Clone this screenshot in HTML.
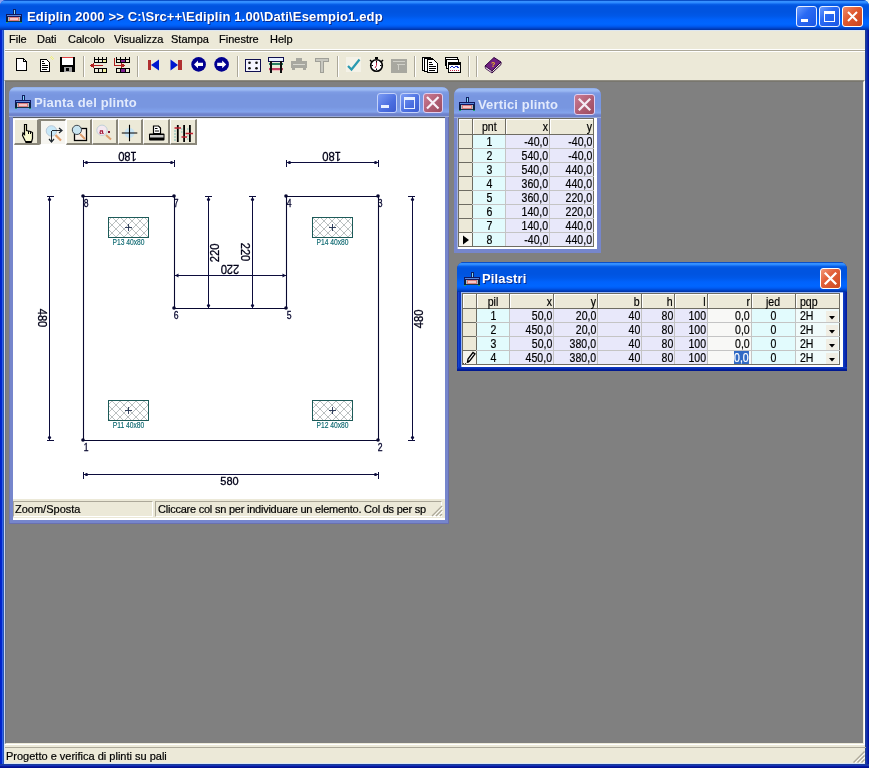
<!DOCTYPE html>
<html><head><meta charset="utf-8">
<style>
*{box-sizing:border-box}
html,body{margin:0;padding:0;width:869px;height:768px;overflow:hidden;background:linear-gradient(to right,#8aa0f0,#c0d0f0 50%,#e0f4f4);font-family:"Liberation Sans",sans-serif}
.a{position:absolute}
#frame{will-change:transform;left:0;top:0;width:869px;height:768px;border-radius:6px 6px 0 0;background:#0842d8;overflow:hidden}
#tb{left:0;top:0;width:869px;height:30px;background:linear-gradient(to bottom,#0a50c8 0px,#0a50c8 1px,#3a94ff 1px,#2a88ff 3px,#0a62ea 4px,#0054e0 6px,#0054e0 12px,#0058e8 16px,#0062fc 20px,#0066ff 24px,#005cf4 26px,#0048d0 28px,#0030a0 30px)}
#lf{left:0;top:30px;width:4px;height:738px;background:linear-gradient(to right,#0020c8 0px,#0028d0 2px,#3060e8 2px,#3060e8 3px,#2454b8 3px,#2454b8 4px)}
#rf{left:865px;top:30px;width:4px;height:738px;background:linear-gradient(to right,#203c90 0px,#203c90 1px,#1434b0 1px,#1434b0 2px,#0c24a8 2px,#0c24a8 3px,#00149c 3px)}
#bf{left:0;top:764px;width:869px;height:4px;background:linear-gradient(to bottom,#1c3c98 0px,#1c3c98 1px,#1434b8 1px,#1434b8 2px,#08189c 2px,#08189c 3px,#001090 3px)}
.ttl{font-weight:bold;color:#fff;white-space:nowrap;letter-spacing:0.15px}
.xbtn{width:21px;height:21px;border:1px solid #fff;border-radius:3px}
.xb{background:linear-gradient(135deg,#6a9cff 0%,#2a6af4 40%,#1a56e4 100%);border-color:#e8eeff}
.xc{background:linear-gradient(135deg,#f08a6a 0%,#e0582e 45%,#c84420 100%)}
#menu{left:4px;top:30px;width:861px;height:19px;background:#ece9d8}
.mi{top:0px;font-size:11px;line-height:19px;color:#000;-webkit-text-stroke:0.2px currentColor}
#tool{left:4px;top:49px;width:861px;height:31px;background:#ece9d8;border-top:1px solid #fff}
#tool:before{content:"";position:absolute;left:0;top:0;width:861px;height:1px;background:#aca899}
#tool:after{content:"";position:absolute;left:0;top:1px;width:861px;height:1px;background:#fff}
.sep{width:2px;height:21px;top:56px;border-left:1px solid #aca899;border-right:1px solid #fff}
#mdi{left:4px;top:80px;width:861px;height:665px;background:#808080;border-top:1px solid #8e8b80;border-left:1px solid #c8d4ec;border-right:1px solid #fff;border-bottom:1px solid #fff}
#mdi2{left:5px;top:81px;width:859px;height:663px;border-top:1px solid #78766e;border-left:1px solid #6a7484;border-right:1px solid #ece9d8;border-bottom:1px solid #ece9d8}
#sbar{left:5px;top:745px;width:860px;height:18px;background:#ece9d8}
.ia{background:linear-gradient(to bottom,#8aa4e0 0px,#9cbcf4 1px,#9ab8f2 3px,#7e9ce4 5px,#7896e0 8px,#7896e0 20px,#7e9ee8 23px,#84a4ec 25px,#7890d8 26px,#6e82cc 27px,#6e82cc 29px,#9aaad8 29px,#9aaad8 30px)}
.ifr{background:#7a8fdc}
.rb{position:absolute;top:1px;height:26px;background:#ece9d8;border-top:1px solid #fff;border-left:1px solid #fff;border-right:2px solid #8a877a;border-bottom:2px solid #8a877a}
.pb{position:absolute;top:1px;height:26px;background:#f6f5f0;border-top:2px solid #8a877a;border-left:2px solid #8a877a;border-right:1px solid #fff;border-bottom:1px solid #fff}
.gt{font-size:12px;white-space:nowrap;overflow:hidden;color:#000;-webkit-text-stroke:0.2px currentColor}
.grid{border-collapse:collapse}
</style></head><body>
<svg width="0" height="0" style="position:absolute"><defs>
 <g id="appico" shape-rendering="crispEdges">
  <rect x="8" y="0" width="3" height="6" fill="#102060"/><rect x="9" y="1" width="1" height="5" fill="#80d8f8"/>
  <rect x="1" y="5" width="16" height="3" fill="#101860"/><rect x="2" y="6" width="14" height="1" fill="#5a88d8"/>
  <rect x="1" y="8" width="2" height="5" fill="#0c2040"/><rect x="15" y="8" width="2" height="5" fill="#0c2040"/>
  <rect x="3" y="8" width="1" height="5" fill="#a8c0c8"/><rect x="14" y="8" width="1" height="5" fill="#a8c0c8"/>
  <rect x="4" y="8" width="10" height="4" fill="#d87c7c"/><rect x="5" y="9" width="8" height="2" fill="#f4c8c8"/>
  <rect x="3" y="12" width="12" height="1" fill="#18384c"/>
  <rect x="1" y="13" width="2" height="1" fill="#20a070"/><rect x="15" y="13" width="2" height="1" fill="#20a070"/>
 </g></defs></svg>
<div id="frame" class="a">
 <div id="tb" class="a"></div>
 <div id="lf" class="a"></div>
 <div id="rf" class="a"></div>
 <div id="bf" class="a"></div>
 <!-- title icon -->
 <svg class="a" style="left:5px;top:9px" width="17" height="14"><use href="#appico"/></svg>
 <div id="title" class="a ttl" style="left:27px;top:9px;font-size:13px;line-height:16px;text-shadow:1px 1px 0 #0a2a8a">Ediplin 2000 &gt;&gt; C:\Src++\Ediplin 1.00\Dati\Esempio1.edp</div>
 <div class="a xbtn xb" style="left:796px;top:6px"><div class="a" style="left:4px;top:12px;width:7px;height:3px;background:#fff"></div></div>
 <div class="a xbtn xb" style="left:819px;top:6px"><div class="a" style="left:4px;top:4px;width:11px;height:11px;border:1px solid #fff;border-top-width:3px"></div></div>
 <div class="a xbtn xc" style="left:842px;top:6px"><svg class="a" style="left:0;top:0" width="19" height="19"><path d="M5 5L14 14M14 5L5 14" stroke="#fff" stroke-width="2"/></svg></div>

 <div id="menu" class="a">
  <div class="a" style="left:0;top:0;width:861px;height:1px;background:#dce6f2"></div>
  <div class="a mi" style="left:5px">File</div>
  <div class="a mi" style="left:33px">Dati</div>
  <div class="a mi" style="left:64px">Calcolo</div>
  <div class="a mi" style="left:110px">Visualizza</div>
  <div class="a mi" style="left:167px">Stampa</div>
  <div class="a mi" style="left:215px">Finestre</div>
  <div class="a mi" style="left:266px">Help</div>
 </div>
 <div id="tool" class="a"></div>

 <!-- toolbar separators -->
 <div class="a sep" style="left:83px"></div>
 <div class="a sep" style="left:137px"></div>
 <div class="a sep" style="left:237px"></div>
 <div class="a sep" style="left:337px"></div>
 <div class="a sep" style="left:414px"></div>
 <div class="a sep" style="left:468px"></div>
 <div class="a sep" style="left:476px"></div>
 <!-- toolbar icons -->
 <svg class="a" style="left:0;top:0" width="520" height="80" viewBox="0 0 520 80" shape-rendering="crispEdges">
  <!-- new -->
  <path d="M16.5 58.5H23.5L26.5 61.5V70.5H16.5Z" fill="#fff" stroke="#000"/>
  <path d="M23.5 58.5V61.5H26.5" fill="none" stroke="#000"/>
  <!-- open doc -->
  <path d="M50 57L53 60M51 56L54 59" stroke="#f0f080" stroke-width="1"/>
  <path d="M40.5 59.5H46.5L49.5 62.5V71.5H40.5Z" fill="#fff" stroke="#000"/>
  <rect x="42" y="61" width="2" height="1" fill="#000"/><rect x="42" y="63" width="3" height="1" fill="#000"/>
  <rect x="42" y="65" width="6" height="1" fill="#000"/><rect x="42" y="67" width="6" height="1" fill="#000"/><rect x="42" y="69" width="5" height="1" fill="#000"/>
  <!-- save -->
  <rect x="60" y="57" width="15" height="15" rx="1" fill="#000"/>
  <rect x="62" y="57" width="11" height="1" fill="#e04040"/>
  <rect x="62" y="58" width="11" height="7" fill="#fff"/>
  <rect x="64" y="67" width="8" height="5" fill="#a0a0a0"/>
  <rect x="66" y="68" width="3" height="3" fill="#000"/>
  <!-- icon4 -->
  <g fill="none" stroke="#000">
   <path d="M94.5 57V62.5H106.5V57M98.5 57V62M102.5 57V62M94.5 59.5H106.5"/>
   <rect x="94.5" y="68.5" width="12" height="4"/>
   <path d="M98.5 69V72M102.5 69V72"/>
  </g>
  <rect x="103" y="60" width="3" height="2" fill="#f0f0a0"/><rect x="103" y="69" width="3" height="3" fill="#f0f0a0"/>
  <path d="M92 65.5H103" stroke="#b02020" stroke-width="1.5"/><path d="M90 65.5L94 62.5V68.5Z" fill="#b02020"/>
  <!-- icon5 -->
  <g fill="none" stroke="#000">
   <path d="M116.5 57V62.5H129.5V57M120.5 57V62M125.5 57V62M116.5 59.5H129.5"/>
   <rect x="116.5" y="68.5" width="13" height="4"/>
   <path d="M120.5 69V72M125.5 69V72"/>
  </g>
  <rect x="121" y="60" width="4" height="2" fill="#802090"/><rect x="121" y="69" width="4" height="3" fill="#802090"/>
  <path d="M114.5 58V65.5H122" stroke="#b02020" stroke-width="1.5" fill="none"/><path d="M125 65.5L121 62.5V68.5Z" fill="#b02020"/>
  <!-- first / last -->
  <rect x="148" y="60" width="3" height="10" fill="#b03030"/>
  <path d="M151 65L159 59.5V70.5Z" fill="#0018d0" shape-rendering="auto"/>
  <path d="M178 65L170.5 59.5V70.5Z" fill="#0018d0" shape-rendering="auto"/>
  <rect x="178" y="60" width="3.5" height="10" fill="#b03030"/>
  <!-- circles -->
  <g shape-rendering="auto">
  <circle cx="198.6" cy="64.4" r="7.3" fill="#000090"/>
  <path d="M194 64.4L198 60.5V62.8H203V66H198V68.3Z" fill="#fff"/>
  <circle cx="221.6" cy="64.4" r="7.3" fill="#000090"/>
  <path d="M226.2 64.4L222.2 60.5V62.8H217.2V66H222.2V68.3Z" fill="#fff"/>
  </g>
  <!-- 4 dots -->
  <rect x="245.5" y="59.5" width="15" height="12" fill="#f4f4ff" stroke="#101050" stroke-width="1.5"/>
  <g shape-rendering="auto" fill="#101010"><circle cx="249.5" cy="62.8" r="1.3"/><circle cx="256.5" cy="62.8" r="1.3"/><circle cx="249.5" cy="68.3" r="1.3"/><circle cx="256.5" cy="68.3" r="1.3"/></g>
  <!-- table icon -->
  <rect x="268.5" y="57.5" width="15" height="3.5" fill="#e8f0ff" stroke="#101050"/>
  <rect x="269" y="63" width="14" height="1.5" fill="#2a8060"/>
  <rect x="269" y="65" width="14" height="1" fill="#e0f0e0"/>
  <rect x="269" y="67.5" width="14" height="2" fill="#c04060"/>
  <rect x="269" y="70" width="14" height="1" fill="#f0c0c0"/>
  <rect x="270" y="61" width="2" height="12" fill="#101010"/><rect x="280" y="61" width="2" height="12" fill="#101010"/>
  <!-- grey printer -->
  <g fill="#a8a8a0">
   <rect x="296" y="58" width="6" height="3"/><rect x="291" y="61" width="16" height="7"/>
   <rect x="292" y="68" width="3" height="2"/><rect x="303" y="68" width="3" height="2"/>
  </g>
  <rect x="293" y="64" width="12" height="1" fill="#d8d8d0"/>
  <!-- grey T -->
  <path d="M315.5 58.5H328.5V61.5H323.5V72H320.5V61.5H315.5Z" fill="#c8c8c0" stroke="#a0a098"/>
  <!-- check -->
  <rect x="346" y="57" width="15" height="15" fill="#f4f2e8"/>
  <path d="M348 66L351.5 69.5L359.5 59.5" stroke="#2a9ab0" stroke-width="2.2" fill="none" shape-rendering="auto"/>
  <!-- stopwatch -->
  <g shape-rendering="auto">
  <rect x="375" y="57" width="3" height="2" fill="#000"/>
  <path d="M370 60L372 62M383 60L381 62" stroke="#000" stroke-width="1.5"/>
  <circle cx="376.5" cy="65.5" r="5.8" fill="#fff" stroke="#000" stroke-width="1.6"/>
  <path d="M376.5 60.5V65.5L375 68" stroke="#c02040" stroke-width="1" fill="none"/>
  <path d="M376.5 61V62.5M376.5 68.5V70M371.5 65.5H373M380 65.5H381.5" stroke="#000" stroke-width="1"/>
  </g>
  <!-- grey rect -->
  <rect x="391" y="59" width="16" height="14" fill="#a8a8a0"/>
  <rect x="393" y="61" width="12" height="1" fill="#d0d0c8"/><rect x="397" y="64" width="8" height="1" fill="#d0d0c8"/><rect x="398" y="65" width="1" height="5" fill="#d0d0c8"/>
  <!-- pages -->
  <g fill="#fff" stroke="#000">
   <rect x="422.5" y="57.5" width="8" height="13"/><rect x="424.5" y="58.5" width="8" height="13"/>
   <path d="M427.5 59.5H433.5L437.5 63.5V72.5H427.5Z"/>
  </g>
  <path d="M429 62H432M429 64H433M429 66H436M429 68H436M429 70H435" stroke="#000"/>
  <!-- cascade -->
  <g fill="#fff" stroke="#000">
   <rect x="445.5" y="57.5" width="12" height="8"/><rect x="446.5" y="59.5" width="12" height="9"/>
   <rect x="448.5" y="62.5" width="12" height="10"/>
  </g>
  <rect x="449" y="63" width="11" height="2" fill="#000"/>
  <path d="M450 68L452 66L454 68L456 66L459 68" stroke="#2030c0" fill="none"/>
  <path d="M450 70H459" stroke="#c02040" stroke-dasharray="1 1"/>
  <!-- help book -->
  <g shape-rendering="auto">
  <path d="M485 66L494 57.5L501 62L492 71Z" fill="#702080" stroke="#300040" stroke-width="1"/>
  <path d="M485 66L485.5 68.5L492 73L492 71Z" fill="#f0e0f0" stroke="#300040" stroke-width="0.8"/>
  <path d="M492 73L501 64.5L501 62" fill="none" stroke="#300040" stroke-width="1"/>
  <text x="491" y="67" font-size="7" font-weight="bold" fill="#f0c020" font-family="Liberation Sans">?</text>
  </g>
 </svg>
 <div id="mdi" class="a"></div>
 <div id="mdi2" class="a"></div>

 <!-- ===== Pianta del plinto ===== -->
 <div id="pw" class="a" style="left:9px;top:87px;width:440px;height:437px;border-radius:7px 7px 0 0;background:#7686cc;overflow:hidden">
  <div class="a ia" style="left:0;top:0;width:440px;height:30px"></div>
  <div class="a" style="left:0;top:30px;width:1px;height:407px;background:#6e78b8"></div>
  <div class="a" style="left:439px;top:30px;width:1px;height:407px;background:#6a70b0"></div>
  <div class="a" style="left:0;top:436px;width:440px;height:1px;background:#6a70b0"></div>
  <div class="a ttl" style="left:25px;top:8px;font-size:13px;line-height:16px;color:#e2eafc">Pianta del plinto</div>
  <div class="a xbtn" style="left:368px;top:6px;width:20px;height:20px;border-color:#c4d2fa;background:linear-gradient(135deg,#7c9cf4,#4a6ee0 60%,#3c5cd0)"><div class="a" style="left:3px;top:11px;width:8px;height:3px;background:#e8f0ff"></div></div>
  <div class="a xbtn" style="left:391px;top:6px;width:20px;height:20px;border-color:#c4d2fa;background:linear-gradient(135deg,#7c9cf4,#4a6ee0 60%,#3c5cd0)"><div class="a" style="left:3px;top:3px;width:11px;height:12px;border:1px solid #e8f0ff;border-top-width:3px"></div></div>
  <div class="a xbtn" style="left:414px;top:6px;width:20px;height:20px;border-color:#e0cef0;background:linear-gradient(135deg,#cc7c94,#ac5a70 60%,#9c4c60)"><svg class="a" style="left:0;top:0" width="18" height="18"><path d="M3 3L14.5 14.5M14.5 3L3 14.5" stroke="#f8f0f8" stroke-width="2.2"/></svg></div>

  <svg class="a" style="left:5px;top:8px" width="17" height="14"><use href="#appico"/></svg>
  <div id="pcl" class="a" style="left:4px;top:30px;width:432px;height:403px;background:#fff;border-top:1px solid #585c64">
   <div class="a" style="left:0;top:0;width:432px;height:1px;background:#f4f4f4"></div>
   <div class="rb" style="left:1px;width:25px"></div>
   <div class="pb" style="left:26px;width:27px"></div>
   <div class="rb" style="left:53px;width:26px"></div>
   <div class="rb" style="left:79px;width:26px"></div>
   <div class="rb" style="left:105px;width:25px"></div>
   <div class="rb" style="left:130px;width:27px"></div>
   <div class="rb" style="left:157px;width:27px"></div>
   <svg class="a" style="left:0;top:0" width="200" height="30" viewBox="13 117 200 30">
    <!-- hand -->
    <path d="M24.5 123.5V133.5L23 132L22.5 134.5L25 139.5L26 141H31.5L32.5 137.5V131.5L30.5 130.5L28.5 130L26.5 129.5V123.5Z" fill="#fafad0" stroke="#000" stroke-width="1.2"/>
    <path d="M28.5 130V133M30.5 130.5V133" stroke="#000" stroke-width="1"/>
    <rect x="25.5" y="140" width="6" height="2" fill="#000"/>
    <!-- zoom arrows -->
    <circle cx="51.4" cy="129.9" r="5.2" fill="#c8e8f8" stroke="#b8c8d8" stroke-width="1"/>
    <path d="M55.5 134L61 139.5" stroke="#e0a070" stroke-width="2.2"/>
    <path d="M52 129.5H61.5M51.5 130V140.5" stroke="#202830" stroke-width="1"/>
    <path d="M59 127L62 129.5L59 132M49 138L51.5 141L54 138" stroke="#202830" stroke-width="1.2" fill="none"/>
    <!-- square + magnifier -->
    <rect x="74.5" y="127.5" width="12" height="12" fill="#f8f0e8" stroke="#000" stroke-width="1.3"/>
    <path d="M80 133L85 138" stroke="#e0a070" stroke-width="2"/>
    <circle cx="76.9" cy="128.9" r="4.6" fill="#c8e4f0" stroke="#404850" stroke-width="1"/>
    <!-- magnifier a -->
    <path d="M106 134L111 138.5" stroke="#e0a070" stroke-width="2"/>
    <circle cx="102" cy="129.3" r="5.2" fill="#f4e8f0" stroke="#c0d0d8" stroke-width="1"/>
    <text x="99.2" y="132.8" font-size="8" font-weight="bold" fill="#a01030" font-family="Liberation Sans">a</text>
    <rect x="108" y="130" width="2" height="2" fill="#801030"/>
    <!-- crosshair -->
    <circle cx="129.5" cy="132" r="5" fill="#c8e4f4"/>
    <path d="M129.5 123.8V140.2M121.8 132H137.3" stroke="#000" stroke-width="1.1"/>
    <!-- printer -->
    <path d="M153.5 125H158.5L160.5 127V132.5H153.5Z" fill="#fff" stroke="#000" stroke-width="1.2"/>
    <path d="M155 127.5H157.5M155 130H159" stroke="#000" stroke-width="1"/>
    <rect x="149" y="132.5" width="15.5" height="7" rx="1" fill="#000"/>
    <rect x="150" y="134" width="13.5" height="2.5" fill="#c8c8c8"/>
    <!-- ruler -->
    <path d="M177.8 124V141M184.1 124V141M189.9 124V141" stroke="#000" stroke-width="1.8"/>
    <path d="M174.5 127H181M181.5 136H187M185.5 132.5H193" stroke="#c02030" stroke-width="1.5"/>
    <path d="M174 130H176M174 133H176M174 136H176M174 139H176M181 128H182.5M181 131H182.5M187 128H188.5M187 135H188.5M187 138H188.5" stroke="#60b0b0" stroke-width="0.8"/>
   </svg>
   <div class="a" style="left:0;top:381px;width:432px;height:19px;background:#ece9d8">
    <div class="a" style="left:0;top:2px;width:140px;height:16px;border-top:1px solid #aca899;border-left:1px solid #aca899;border-bottom:1px solid #fff;border-right:1px solid #fff"></div>
    <div class="a" style="left:142px;top:2px;width:287px;height:16px;border-top:1px solid #aca899;border-left:1px solid #aca899;border-bottom:1px solid #fff;border-right:1px solid #fff"></div>
    <div class="a" style="left:2px;top:3px;font-size:11px;line-height:14px;white-space:nowrap;-webkit-text-stroke:0.2px #000">Zoom/Sposta</div>
    <div class="a" style="left:145px;top:3px;font-size:11px;line-height:14px;white-space:nowrap;letter-spacing:-0.23px;-webkit-text-stroke:0.2px #000">Cliccare col sn per individuare un elemento. Col ds per sp</div>
    <svg class="a" style="left:418px;top:6px" width="12" height="12"><path d="M11 1L1 11M11 5L5 11M11 9L9 11" stroke="#aca899" stroke-width="1.2"/><path d="M12 2L2 12M12 6L6 12" stroke="#fff" stroke-width="0.8"/></svg>
   </div>
  </div>
 </div>

 <!-- drawing -->
 <svg class="a" style="left:0;top:0" width="869" height="768" font-family="Liberation Sans">
 <defs><pattern id="hatch" patternUnits="userSpaceOnUse" width="8" height="8" x="0" y="1"><path d="M0 0L8 8M8 0L0 8" stroke="#a8b0b0" stroke-width="0.8"/></pattern></defs>
 <rect x="108.5" y="217.5" width="40" height="20" fill="url(#hatch)" stroke="#1c5a58"/>
 <path d="M125 227.5H132M128.5 224V231" stroke="#203050" stroke-width="0.9"/>
 <text x="0" y="0" transform="translate(128.5 242.5) scale(0.78 1)" text-anchor="middle" dominant-baseline="central" font-size="8.6" fill="#0c6870" stroke="#0c6870" stroke-width="0.15">P13 40x80</text>
 <rect x="312.5" y="217.5" width="40" height="20" fill="url(#hatch)" stroke="#1c5a58"/>
 <path d="M329 227.5H336M332.5 224V231" stroke="#203050" stroke-width="0.9"/>
 <text x="0" y="0" transform="translate(332.5 242.5) scale(0.78 1)" text-anchor="middle" dominant-baseline="central" font-size="8.6" fill="#0c6870" stroke="#0c6870" stroke-width="0.15">P14 40x80</text>
 <rect x="108.5" y="400.5" width="40" height="20" fill="url(#hatch)" stroke="#1c5a58"/>
 <path d="M125 410.5H132M128.5 407V414" stroke="#203050" stroke-width="0.9"/>
 <text x="0" y="0" transform="translate(128.5 425.5) scale(0.78 1)" text-anchor="middle" dominant-baseline="central" font-size="8.6" fill="#0c6870" stroke="#0c6870" stroke-width="0.15">P11 40x80</text>
 <rect x="312.5" y="400.5" width="40" height="20" fill="url(#hatch)" stroke="#1c5a58"/>
 <path d="M329 410.5H336M332.5 407V414" stroke="#203050" stroke-width="0.9"/>
 <text x="0" y="0" transform="translate(332.5 425.5) scale(0.78 1)" text-anchor="middle" dominant-baseline="central" font-size="8.6" fill="#0c6870" stroke="#0c6870" stroke-width="0.15">P12 40x80</text>
 <path d="M83.5 196.5H174.5V308.5H286.5V196.5H378.5V440.5H83.5Z" fill="none" stroke="#080830" stroke-width="1.1"/>
 <circle cx="83.0" cy="196.0" r="1.8" fill="#080830"/>
 <circle cx="174.0" cy="196.0" r="1.8" fill="#080830"/>
 <circle cx="286.0" cy="196.0" r="1.8" fill="#080830"/>
 <circle cx="378.0" cy="196.0" r="1.8" fill="#080830"/>
 <circle cx="174.0" cy="308.0" r="1.8" fill="#080830"/>
 <circle cx="286.0" cy="308.0" r="1.8" fill="#080830"/>
 <circle cx="83.0" cy="440.0" r="1.8" fill="#080830"/>
 <circle cx="378.0" cy="440.0" r="1.8" fill="#080830"/>
 <text x="0" y="0" transform="translate(83.7 203.0) scale(0.82 1)" dominant-baseline="central" font-size="10.5" fill="#080830" stroke="#080830" stroke-width="0.3">8</text>
 <text x="0" y="0" transform="translate(173.7 203.0) scale(0.82 1)" dominant-baseline="central" font-size="10.5" fill="#080830" stroke="#080830" stroke-width="0.3">7</text>
 <text x="0" y="0" transform="translate(286.7 203.0) scale(0.82 1)" dominant-baseline="central" font-size="10.5" fill="#080830" stroke="#080830" stroke-width="0.3">4</text>
 <text x="0" y="0" transform="translate(377.7 203.0) scale(0.82 1)" dominant-baseline="central" font-size="10.5" fill="#080830" stroke="#080830" stroke-width="0.3">3</text>
 <text x="0" y="0" transform="translate(173.7 315.0) scale(0.82 1)" dominant-baseline="central" font-size="10.5" fill="#080830" stroke="#080830" stroke-width="0.3">6</text>
 <text x="0" y="0" transform="translate(286.7 315.0) scale(0.82 1)" dominant-baseline="central" font-size="10.5" fill="#080830" stroke="#080830" stroke-width="0.3">5</text>
 <text x="0" y="0" transform="translate(83.7 447.0) scale(0.82 1)" dominant-baseline="central" font-size="10.5" fill="#080830" stroke="#080830" stroke-width="0.3">1</text>
 <text x="0" y="0" transform="translate(377.7 447.0) scale(0.82 1)" dominant-baseline="central" font-size="10.5" fill="#080830" stroke="#080830" stroke-width="0.3">2</text>
 <path d="M83 162.5H175" stroke="#0c0c3c"/><path d="M83.5 160V167" stroke="#0c0c3c"/><path d="M174.5 160V167" stroke="#0c0c3c"/><circle cx="86.5" cy="162.5" r="1.6" fill="#0c0c3c"/><circle cx="171.5" cy="162.5" r="1.6" fill="#0c0c3c"/>
 <path d="M286 162.5H379" stroke="#0c0c3c"/><path d="M286.5 160V167" stroke="#0c0c3c"/><path d="M378.5 160V167" stroke="#0c0c3c"/><circle cx="289.5" cy="162.5" r="1.6" fill="#0c0c3c"/><circle cx="375.5" cy="162.5" r="1.6" fill="#0c0c3c"/>
 <path d="M49.5 196V441" stroke="#0c0c3c"/><path d="M47 196.5H54" stroke="#0c0c3c"/><path d="M47 440.5H54" stroke="#0c0c3c"/><circle cx="49.5" cy="199.5" r="1.6" fill="#0c0c3c"/><circle cx="49.5" cy="437.5" r="1.6" fill="#0c0c3c"/>
 <path d="M412.5 196V441" stroke="#0c0c3c"/><path d="M408 196.5H415" stroke="#0c0c3c"/><path d="M408 440.5H415" stroke="#0c0c3c"/><circle cx="412.5" cy="199.5" r="1.6" fill="#0c0c3c"/><circle cx="412.5" cy="437.5" r="1.6" fill="#0c0c3c"/>
 <path d="M83 474.5H379" stroke="#0c0c3c"/><path d="M83.5 472V479" stroke="#0c0c3c"/><path d="M378.5 472V479" stroke="#0c0c3c"/><circle cx="86.5" cy="474.5" r="1.6" fill="#0c0c3c"/><circle cx="375.5" cy="474.5" r="1.6" fill="#0c0c3c"/>
 <path d="M208.5 196V309" stroke="#0c0c3c"/><path d="M205 196.5H212" stroke="#0c0c3c"/><circle cx="208.5" cy="199.5" r="1.6" fill="#0c0c3c"/><circle cx="208.5" cy="305.5" r="1.6" fill="#0c0c3c"/>
 <path d="M252.5 196V309" stroke="#0c0c3c"/><path d="M249 196.5H256" stroke="#0c0c3c"/><circle cx="252.5" cy="199.5" r="1.6" fill="#0c0c3c"/><circle cx="252.5" cy="305.5" r="1.6" fill="#0c0c3c"/>
 <path d="M175 275.5H286" stroke="#0c0c3c"/><path d="M175 275.5L178.5 273.5V277.5ZM286 275.5L282.5 273.5V277.5Z" fill="#0c0c3c"/>
 <text x="0" y="0" transform="translate(127.5 156) scale(1 1) rotate(180) scale(0.9 1)" text-anchor="middle" dominant-baseline="central" font-size="12.5" fill="#000018" stroke="#000018" stroke-width="0.3">180</text>
 <text x="0" y="0" transform="translate(331.7 156) scale(1 1) rotate(180) scale(0.9 1)" text-anchor="middle" dominant-baseline="central" font-size="12.5" fill="#000018" stroke="#000018" stroke-width="0.3">180</text>
 <text x="0" y="0" transform="translate(42 318) scale(1 1) rotate(90) scale(0.9 1)" text-anchor="middle" dominant-baseline="central" font-size="12.5" fill="#000018" stroke="#000018" stroke-width="0.3">480</text>
 <text x="0" y="0" transform="translate(419 318.8) scale(1 1) rotate(-90) scale(0.9 1)" text-anchor="middle" dominant-baseline="central" font-size="12.5" fill="#000018" stroke="#000018" stroke-width="0.3">480</text>
 <text x="0" y="0" transform="translate(229.5 481) rotate(0)" text-anchor="middle" dominant-baseline="central" font-size="11" fill="#000018" stroke="#000018" stroke-width="0.3">580</text>
 <text x="0" y="0" transform="translate(230 269) scale(1 1) rotate(180) scale(0.9 1)" text-anchor="middle" dominant-baseline="central" font-size="12.5" fill="#000018" stroke="#000018" stroke-width="0.3">220</text>
 <text x="0" y="0" transform="translate(215 252.8) scale(1 1) rotate(-90) scale(0.9 1)" text-anchor="middle" dominant-baseline="central" font-size="12.5" fill="#000018" stroke="#000018" stroke-width="0.3">220</text>
 <text x="0" y="0" transform="translate(245.2 252) scale(1 1) rotate(90) scale(0.9 1)" text-anchor="middle" dominant-baseline="central" font-size="12.5" fill="#000018" stroke="#000018" stroke-width="0.3">220</text>
 </svg>
<!--GRIDS-->
<!-- ===== Vertici plinto ===== -->
<div class="a" style="left:454px;top:88px;width:147px;height:165px;border-radius:7px 7px 0 0;background:#7686cc;overflow:hidden"><div class="a" style="left:0;top:0;width:147px;height:30px;background:linear-gradient(to bottom,#8aa4e0 0px,#9cbcf4 1px,#9ab8f2 3px,#7e9ce4 5px,#7896e0 8px,#7896e0 20px,#7e9ee8 23px,#84a4ec 25px,#7890d8 26px,#6e82cc 27px,#6e82cc 29px,#9aaad8 29px,#9aaad8 30px)"></div></div>
<svg class="a" style="left:458px;top:97px" width="17" height="14"><use href="#appico"/></svg>
<div class="a ttl" style="left:478px;top:97px;font-size:13px;line-height:16px;color:#e2eafc">Vertici plinto</div>
<div class="a xbtn" style="left:574px;top:94px;width:21px;height:21px;border-color:#e0cef0;background:linear-gradient(135deg,#cc7c94 0%,#ac5a70 60%,#9c4c60 100%)"><svg class="a" style="left:0;top:0" width="19" height="19"><path d="M3.8000000000000003 3.8000000000000003L15.200000000000001 15.200000000000001M15.200000000000001 3.8000000000000003L3.8000000000000003 15.200000000000001" stroke="#f4ecf4" stroke-width="2.3"/></svg></div>
<div class="a" style="left:457px;top:118px;width:140px;height:131px;background:#fff;border-left:1px solid #a8b8e0"></div>
<div class="a" style="left:459px;top:119px;width:13px;height:15px;background:#ece9d8;border-top:1px solid #fff;border-left:1px solid #fff"></div>
<div class="a" style="left:459px;top:135px;width:13px;height:13px;background:#ece9d8"></div>
<div class="a" style="left:459px;top:149px;width:13px;height:13px;background:#ece9d8"></div>
<div class="a" style="left:459px;top:163px;width:13px;height:13px;background:#ece9d8"></div>
<div class="a" style="left:459px;top:177px;width:13px;height:13px;background:#ece9d8"></div>
<div class="a" style="left:459px;top:191px;width:13px;height:13px;background:#ece9d8"></div>
<div class="a" style="left:459px;top:205px;width:13px;height:13px;background:#ece9d8"></div>
<div class="a" style="left:459px;top:219px;width:13px;height:13px;background:#ece9d8"></div>
<div class="a" style="left:459px;top:233px;width:13px;height:13px;background:#ece9d8"></div>
<div class="a" style="left:473px;top:119px;width:32px;height:15px;background:#ece9d8;border-top:1px solid #fff;border-left:1px solid #fff"></div>
<div class="a" style="left:473px;top:135px;width:32px;height:13px;background:#e2fbfd"></div>
<div class="a" style="left:473px;top:149px;width:32px;height:13px;background:#e2fbfd"></div>
<div class="a" style="left:473px;top:163px;width:32px;height:13px;background:#e2fbfd"></div>
<div class="a" style="left:473px;top:177px;width:32px;height:13px;background:#e2fbfd"></div>
<div class="a" style="left:473px;top:191px;width:32px;height:13px;background:#e2fbfd"></div>
<div class="a" style="left:473px;top:205px;width:32px;height:13px;background:#e2fbfd"></div>
<div class="a" style="left:473px;top:219px;width:32px;height:13px;background:#e2fbfd"></div>
<div class="a" style="left:473px;top:233px;width:32px;height:13px;background:#e2fbfd"></div>
<div class="a" style="left:506px;top:119px;width:43px;height:15px;background:#ece9d8;border-top:1px solid #fff;border-left:1px solid #fff"></div>
<div class="a" style="left:506px;top:135px;width:43px;height:13px;background:#e8e8fa"></div>
<div class="a" style="left:506px;top:149px;width:43px;height:13px;background:#e8e8fa"></div>
<div class="a" style="left:506px;top:163px;width:43px;height:13px;background:#e8e8fa"></div>
<div class="a" style="left:506px;top:177px;width:43px;height:13px;background:#e8e8fa"></div>
<div class="a" style="left:506px;top:191px;width:43px;height:13px;background:#e8e8fa"></div>
<div class="a" style="left:506px;top:205px;width:43px;height:13px;background:#e8e8fa"></div>
<div class="a" style="left:506px;top:219px;width:43px;height:13px;background:#e8e8fa"></div>
<div class="a" style="left:506px;top:233px;width:43px;height:13px;background:#e8e8fa"></div>
<div class="a" style="left:550px;top:119px;width:43px;height:15px;background:#ece9d8;border-top:1px solid #fff;border-left:1px solid #fff"></div>
<div class="a" style="left:550px;top:135px;width:43px;height:13px;background:#e8e8fa"></div>
<div class="a" style="left:550px;top:149px;width:43px;height:13px;background:#e8e8fa"></div>
<div class="a" style="left:550px;top:163px;width:43px;height:13px;background:#e8e8fa"></div>
<div class="a" style="left:550px;top:177px;width:43px;height:13px;background:#e8e8fa"></div>
<div class="a" style="left:550px;top:191px;width:43px;height:13px;background:#e8e8fa"></div>
<div class="a" style="left:550px;top:205px;width:43px;height:13px;background:#e8e8fa"></div>
<div class="a" style="left:550px;top:219px;width:43px;height:13px;background:#e8e8fa"></div>
<div class="a" style="left:550px;top:233px;width:43px;height:13px;background:#e8e8fa"></div>
<div class="a" style="left:458px;top:134px;width:1px;height:113px;background:#6e6c62"></div>
<div class="a" style="left:458px;top:118px;width:1px;height:16px;background:#6e6c62"></div>
<div class="a" style="left:472px;top:134px;width:1px;height:113px;background:#6e6c62"></div>
<div class="a" style="left:472px;top:118px;width:1px;height:16px;background:#6e6c62"></div>
<div class="a" style="left:505px;top:134px;width:1px;height:113px;background:#c4c4c4"></div>
<div class="a" style="left:505px;top:118px;width:1px;height:16px;background:#6e6c62"></div>
<div class="a" style="left:549px;top:134px;width:1px;height:113px;background:#c4c4c4"></div>
<div class="a" style="left:549px;top:118px;width:1px;height:16px;background:#6e6c62"></div>
<div class="a" style="left:593px;top:134px;width:1px;height:113px;background:#6e6c62"></div>
<div class="a" style="left:593px;top:118px;width:1px;height:16px;background:#6e6c62"></div>
<div class="a" style="left:458px;top:118px;width:136px;height:1px;background:#6e6c62"></div>
<div class="a" style="left:458px;top:134px;width:136px;height:1px;background:#6e6c62"></div>
<div class="a" style="left:472px;top:148px;width:122px;height:1px;background:#c4c4c4"></div>
<div class="a" style="left:458px;top:148px;width:14px;height:1px;background:#6e6c62"></div>
<div class="a" style="left:472px;top:162px;width:122px;height:1px;background:#c4c4c4"></div>
<div class="a" style="left:458px;top:162px;width:14px;height:1px;background:#6e6c62"></div>
<div class="a" style="left:472px;top:176px;width:122px;height:1px;background:#c4c4c4"></div>
<div class="a" style="left:458px;top:176px;width:14px;height:1px;background:#6e6c62"></div>
<div class="a" style="left:472px;top:190px;width:122px;height:1px;background:#c4c4c4"></div>
<div class="a" style="left:458px;top:190px;width:14px;height:1px;background:#6e6c62"></div>
<div class="a" style="left:472px;top:204px;width:122px;height:1px;background:#c4c4c4"></div>
<div class="a" style="left:458px;top:204px;width:14px;height:1px;background:#6e6c62"></div>
<div class="a" style="left:472px;top:218px;width:122px;height:1px;background:#c4c4c4"></div>
<div class="a" style="left:458px;top:218px;width:14px;height:1px;background:#6e6c62"></div>
<div class="a" style="left:472px;top:232px;width:122px;height:1px;background:#c4c4c4"></div>
<div class="a" style="left:458px;top:232px;width:14px;height:1px;background:#6e6c62"></div>
<div class="a" style="left:472px;top:246px;width:122px;height:1px;background:#6e6c62"></div>
<div class="a" style="left:458px;top:246px;width:14px;height:1px;background:#6e6c62"></div>
<div class="a gt" style="left:473px;top:120px;width:32px;height:15px;line-height:15px;text-align:center;padding:0 2px 0 2px;color:#000"><span style="display:inline-block;transform:scaleX(0.88);transform-origin:center">pnt</span></div>
<div class="a gt" style="left:506px;top:120px;width:43px;height:15px;line-height:15px;text-align:right;padding:0 1px 0 2px;color:#000"><span style="display:inline-block;transform:scaleX(0.88);transform-origin:right">x</span></div>
<div class="a gt" style="left:550px;top:120px;width:43px;height:15px;line-height:15px;text-align:right;padding:0 1px 0 2px;color:#000"><span style="display:inline-block;transform:scaleX(0.88);transform-origin:right">y</span></div>
<div class="a gt" style="left:473px;top:136px;width:32px;height:13px;line-height:13px;text-align:center;padding:0 2px 0 2px;color:#000"><span style="display:inline-block;transform:scaleX(0.88);transform-origin:center">1</span></div>
<div class="a gt" style="left:506px;top:136px;width:43px;height:13px;line-height:13px;text-align:right;padding:0 1px 0 2px;color:#000"><span style="display:inline-block;transform:scaleX(0.88);transform-origin:right">-40,0</span></div>
<div class="a gt" style="left:550px;top:136px;width:43px;height:13px;line-height:13px;text-align:right;padding:0 1px 0 2px;color:#000"><span style="display:inline-block;transform:scaleX(0.88);transform-origin:right">-40,0</span></div>
<div class="a gt" style="left:473px;top:150px;width:32px;height:13px;line-height:13px;text-align:center;padding:0 2px 0 2px;color:#000"><span style="display:inline-block;transform:scaleX(0.88);transform-origin:center">2</span></div>
<div class="a gt" style="left:506px;top:150px;width:43px;height:13px;line-height:13px;text-align:right;padding:0 1px 0 2px;color:#000"><span style="display:inline-block;transform:scaleX(0.88);transform-origin:right">540,0</span></div>
<div class="a gt" style="left:550px;top:150px;width:43px;height:13px;line-height:13px;text-align:right;padding:0 1px 0 2px;color:#000"><span style="display:inline-block;transform:scaleX(0.88);transform-origin:right">-40,0</span></div>
<div class="a gt" style="left:473px;top:164px;width:32px;height:13px;line-height:13px;text-align:center;padding:0 2px 0 2px;color:#000"><span style="display:inline-block;transform:scaleX(0.88);transform-origin:center">3</span></div>
<div class="a gt" style="left:506px;top:164px;width:43px;height:13px;line-height:13px;text-align:right;padding:0 1px 0 2px;color:#000"><span style="display:inline-block;transform:scaleX(0.88);transform-origin:right">540,0</span></div>
<div class="a gt" style="left:550px;top:164px;width:43px;height:13px;line-height:13px;text-align:right;padding:0 1px 0 2px;color:#000"><span style="display:inline-block;transform:scaleX(0.88);transform-origin:right">440,0</span></div>
<div class="a gt" style="left:473px;top:178px;width:32px;height:13px;line-height:13px;text-align:center;padding:0 2px 0 2px;color:#000"><span style="display:inline-block;transform:scaleX(0.88);transform-origin:center">4</span></div>
<div class="a gt" style="left:506px;top:178px;width:43px;height:13px;line-height:13px;text-align:right;padding:0 1px 0 2px;color:#000"><span style="display:inline-block;transform:scaleX(0.88);transform-origin:right">360,0</span></div>
<div class="a gt" style="left:550px;top:178px;width:43px;height:13px;line-height:13px;text-align:right;padding:0 1px 0 2px;color:#000"><span style="display:inline-block;transform:scaleX(0.88);transform-origin:right">440,0</span></div>
<div class="a gt" style="left:473px;top:192px;width:32px;height:13px;line-height:13px;text-align:center;padding:0 2px 0 2px;color:#000"><span style="display:inline-block;transform:scaleX(0.88);transform-origin:center">5</span></div>
<div class="a gt" style="left:506px;top:192px;width:43px;height:13px;line-height:13px;text-align:right;padding:0 1px 0 2px;color:#000"><span style="display:inline-block;transform:scaleX(0.88);transform-origin:right">360,0</span></div>
<div class="a gt" style="left:550px;top:192px;width:43px;height:13px;line-height:13px;text-align:right;padding:0 1px 0 2px;color:#000"><span style="display:inline-block;transform:scaleX(0.88);transform-origin:right">220,0</span></div>
<div class="a gt" style="left:473px;top:206px;width:32px;height:13px;line-height:13px;text-align:center;padding:0 2px 0 2px;color:#000"><span style="display:inline-block;transform:scaleX(0.88);transform-origin:center">6</span></div>
<div class="a gt" style="left:506px;top:206px;width:43px;height:13px;line-height:13px;text-align:right;padding:0 1px 0 2px;color:#000"><span style="display:inline-block;transform:scaleX(0.88);transform-origin:right">140,0</span></div>
<div class="a gt" style="left:550px;top:206px;width:43px;height:13px;line-height:13px;text-align:right;padding:0 1px 0 2px;color:#000"><span style="display:inline-block;transform:scaleX(0.88);transform-origin:right">220,0</span></div>
<div class="a gt" style="left:473px;top:220px;width:32px;height:13px;line-height:13px;text-align:center;padding:0 2px 0 2px;color:#000"><span style="display:inline-block;transform:scaleX(0.88);transform-origin:center">7</span></div>
<div class="a gt" style="left:506px;top:220px;width:43px;height:13px;line-height:13px;text-align:right;padding:0 1px 0 2px;color:#000"><span style="display:inline-block;transform:scaleX(0.88);transform-origin:right">140,0</span></div>
<div class="a gt" style="left:550px;top:220px;width:43px;height:13px;line-height:13px;text-align:right;padding:0 1px 0 2px;color:#000"><span style="display:inline-block;transform:scaleX(0.88);transform-origin:right">440,0</span></div>
<div class="a gt" style="left:473px;top:234px;width:32px;height:13px;line-height:13px;text-align:center;padding:0 2px 0 2px;color:#000"><span style="display:inline-block;transform:scaleX(0.88);transform-origin:center">8</span></div>
<div class="a gt" style="left:506px;top:234px;width:43px;height:13px;line-height:13px;text-align:right;padding:0 1px 0 2px;color:#000"><span style="display:inline-block;transform:scaleX(0.88);transform-origin:right">-40,0</span></div>
<div class="a gt" style="left:550px;top:234px;width:43px;height:13px;line-height:13px;text-align:right;padding:0 1px 0 2px;color:#000"><span style="display:inline-block;transform:scaleX(0.88);transform-origin:right">440,0</span></div>
<div class="a" style="left:459px;top:233px;width:13px;height:13px;background:#f8f6ee"></div>
<svg class="a" style="left:462px;top:235px" width="8" height="10"><path d="M1 0.5L7 5L1 9.5Z" fill="#000"/></svg>
<!-- ===== Pilastri ===== -->
<div class="a" style="left:457px;top:262px;width:390px;height:109px;border-radius:7px 7px 0 0;background:linear-gradient(to right,#0a28a8 0px,#0a28a8 1px,#1444d0 1px,#1444d0 2px,#0a36c0 2px,#0a36c0 4px,#0a36c0 386px,#1040c8 386px,#0a2cb0 388px,#00189c 390px);overflow:hidden"><div class="a" style="left:0;top:0;width:390px;height:30px;background:linear-gradient(to bottom,#0a50c8 0px,#0a50c8 1px,#3a94ff 1px,#2a88ff 3px,#0a62ea 4px,#0054e0 6px,#0054e0 12px,#0058e8 16px,#0062fc 20px,#0066ff 24px,#005cf4 26px,#0048d0 28px,#0030a0 30px)"></div><div class="a" style="left:0;top:105px;width:390px;height:4px;background:linear-gradient(to bottom,#0a36c0 0px,#0a36c0 1px,#0a2cb0 1px,#0a2cb0 2px,#0020a0 2px,#0020a0 3px,#001890 3px)"></div></div>
<svg class="a" style="left:463px;top:272px" width="17" height="14"><use href="#appico"/></svg>
<div class="a ttl" style="left:482px;top:271px;font-size:13px;line-height:16px;color:#fff;text-shadow:1px 1px 0 #0a2a8a">Pilastri</div>
<div class="a xbtn" style="left:820px;top:268px;width:21px;height:21px;border-color:#fff;background:linear-gradient(135deg,#f49a7a 0%,#e2603a 40%,#cc4a22 100%)"><svg class="a" style="left:0;top:0" width="19" height="19"><path d="M3.8000000000000003 3.8000000000000003L15.200000000000001 15.200000000000001M15.200000000000001 3.8000000000000003L3.8000000000000003 15.200000000000001" stroke="#fff" stroke-width="2.3"/></svg></div>
<div class="a" style="left:461px;top:292px;width:382px;height:75px;background:#fff;border-left:1px solid #9ab8f4;border-top:1px solid #9ab8f4"></div>
<div class="a" style="left:463px;top:294px;width:13px;height:14px;background:#ece9d8;border-top:1px solid #fff;border-left:1px solid #fff"></div>
<div class="a" style="left:463px;top:309px;width:13px;height:13px;background:#ece9d8"></div>
<div class="a" style="left:463px;top:323px;width:13px;height:13px;background:#ece9d8"></div>
<div class="a" style="left:463px;top:337px;width:13px;height:13px;background:#ece9d8"></div>
<div class="a" style="left:463px;top:351px;width:13px;height:13px;background:#ece9d8"></div>
<div class="a" style="left:477px;top:294px;width:32px;height:14px;background:#ece9d8;border-top:1px solid #fff;border-left:1px solid #fff"></div>
<div class="a" style="left:477px;top:309px;width:32px;height:13px;background:#e2fbfd"></div>
<div class="a" style="left:477px;top:323px;width:32px;height:13px;background:#e2fbfd"></div>
<div class="a" style="left:477px;top:337px;width:32px;height:13px;background:#e2fbfd"></div>
<div class="a" style="left:477px;top:351px;width:32px;height:13px;background:#e2fbfd"></div>
<div class="a" style="left:510px;top:294px;width:43px;height:14px;background:#ece9d8;border-top:1px solid #fff;border-left:1px solid #fff"></div>
<div class="a" style="left:510px;top:309px;width:43px;height:13px;background:#e8e8fa"></div>
<div class="a" style="left:510px;top:323px;width:43px;height:13px;background:#e8e8fa"></div>
<div class="a" style="left:510px;top:337px;width:43px;height:13px;background:#e8e8fa"></div>
<div class="a" style="left:510px;top:351px;width:43px;height:13px;background:#e8e8fa"></div>
<div class="a" style="left:554px;top:294px;width:43px;height:14px;background:#ece9d8;border-top:1px solid #fff;border-left:1px solid #fff"></div>
<div class="a" style="left:554px;top:309px;width:43px;height:13px;background:#e8e8fa"></div>
<div class="a" style="left:554px;top:323px;width:43px;height:13px;background:#e8e8fa"></div>
<div class="a" style="left:554px;top:337px;width:43px;height:13px;background:#e8e8fa"></div>
<div class="a" style="left:554px;top:351px;width:43px;height:13px;background:#e8e8fa"></div>
<div class="a" style="left:598px;top:294px;width:43px;height:14px;background:#ece9d8;border-top:1px solid #fff;border-left:1px solid #fff"></div>
<div class="a" style="left:598px;top:309px;width:43px;height:13px;background:#e8e8fa"></div>
<div class="a" style="left:598px;top:323px;width:43px;height:13px;background:#e8e8fa"></div>
<div class="a" style="left:598px;top:337px;width:43px;height:13px;background:#e8e8fa"></div>
<div class="a" style="left:598px;top:351px;width:43px;height:13px;background:#e8e8fa"></div>
<div class="a" style="left:642px;top:294px;width:32px;height:14px;background:#ece9d8;border-top:1px solid #fff;border-left:1px solid #fff"></div>
<div class="a" style="left:642px;top:309px;width:32px;height:13px;background:#e8e8fa"></div>
<div class="a" style="left:642px;top:323px;width:32px;height:13px;background:#e8e8fa"></div>
<div class="a" style="left:642px;top:337px;width:32px;height:13px;background:#e8e8fa"></div>
<div class="a" style="left:642px;top:351px;width:32px;height:13px;background:#e8e8fa"></div>
<div class="a" style="left:675px;top:294px;width:32px;height:14px;background:#ece9d8;border-top:1px solid #fff;border-left:1px solid #fff"></div>
<div class="a" style="left:675px;top:309px;width:32px;height:13px;background:#e8e8fa"></div>
<div class="a" style="left:675px;top:323px;width:32px;height:13px;background:#e8e8fa"></div>
<div class="a" style="left:675px;top:337px;width:32px;height:13px;background:#e8e8fa"></div>
<div class="a" style="left:675px;top:351px;width:32px;height:13px;background:#e8e8fa"></div>
<div class="a" style="left:708px;top:294px;width:43px;height:14px;background:#ece9d8;border-top:1px solid #fff;border-left:1px solid #fff"></div>
<div class="a" style="left:708px;top:309px;width:43px;height:13px;background:#f8f8f6"></div>
<div class="a" style="left:708px;top:323px;width:43px;height:13px;background:#f8f8f6"></div>
<div class="a" style="left:708px;top:337px;width:43px;height:13px;background:#f8f8f6"></div>
<div class="a" style="left:708px;top:351px;width:43px;height:13px;background:#f8f8f6"></div>
<div class="a" style="left:752px;top:294px;width:43px;height:14px;background:#ece9d8;border-top:1px solid #fff;border-left:1px solid #fff"></div>
<div class="a" style="left:752px;top:309px;width:43px;height:13px;background:#e2fbfd"></div>
<div class="a" style="left:752px;top:323px;width:43px;height:13px;background:#e2fbfd"></div>
<div class="a" style="left:752px;top:337px;width:43px;height:13px;background:#e2fbfd"></div>
<div class="a" style="left:752px;top:351px;width:43px;height:13px;background:#e2fbfd"></div>
<div class="a" style="left:796px;top:294px;width:43px;height:14px;background:#ece9d8;border-top:1px solid #fff;border-left:1px solid #fff"></div>
<div class="a" style="left:796px;top:309px;width:43px;height:13px;background:#f0fbfb"></div>
<div class="a" style="left:796px;top:323px;width:43px;height:13px;background:#f0fbfb"></div>
<div class="a" style="left:796px;top:337px;width:43px;height:13px;background:#f0fbfb"></div>
<div class="a" style="left:796px;top:351px;width:43px;height:13px;background:#f0fbfb"></div>
<div class="a" style="left:462px;top:308px;width:1px;height:57px;background:#6e6c62"></div>
<div class="a" style="left:462px;top:293px;width:1px;height:15px;background:#6e6c62"></div>
<div class="a" style="left:476px;top:308px;width:1px;height:57px;background:#6e6c62"></div>
<div class="a" style="left:476px;top:293px;width:1px;height:15px;background:#6e6c62"></div>
<div class="a" style="left:509px;top:308px;width:1px;height:57px;background:#c4c4c4"></div>
<div class="a" style="left:509px;top:293px;width:1px;height:15px;background:#6e6c62"></div>
<div class="a" style="left:553px;top:308px;width:1px;height:57px;background:#c4c4c4"></div>
<div class="a" style="left:553px;top:293px;width:1px;height:15px;background:#6e6c62"></div>
<div class="a" style="left:597px;top:308px;width:1px;height:57px;background:#c4c4c4"></div>
<div class="a" style="left:597px;top:293px;width:1px;height:15px;background:#6e6c62"></div>
<div class="a" style="left:641px;top:308px;width:1px;height:57px;background:#c4c4c4"></div>
<div class="a" style="left:641px;top:293px;width:1px;height:15px;background:#6e6c62"></div>
<div class="a" style="left:674px;top:308px;width:1px;height:57px;background:#c4c4c4"></div>
<div class="a" style="left:674px;top:293px;width:1px;height:15px;background:#6e6c62"></div>
<div class="a" style="left:707px;top:308px;width:1px;height:57px;background:#c4c4c4"></div>
<div class="a" style="left:707px;top:293px;width:1px;height:15px;background:#6e6c62"></div>
<div class="a" style="left:751px;top:308px;width:1px;height:57px;background:#c4c4c4"></div>
<div class="a" style="left:751px;top:293px;width:1px;height:15px;background:#6e6c62"></div>
<div class="a" style="left:795px;top:308px;width:1px;height:57px;background:#c4c4c4"></div>
<div class="a" style="left:795px;top:293px;width:1px;height:15px;background:#6e6c62"></div>
<div class="a" style="left:839px;top:308px;width:1px;height:57px;background:#6e6c62"></div>
<div class="a" style="left:839px;top:293px;width:1px;height:15px;background:#6e6c62"></div>
<div class="a" style="left:462px;top:293px;width:378px;height:1px;background:#6e6c62"></div>
<div class="a" style="left:462px;top:308px;width:378px;height:1px;background:#6e6c62"></div>
<div class="a" style="left:476px;top:322px;width:364px;height:1px;background:#c4c4c4"></div>
<div class="a" style="left:462px;top:322px;width:14px;height:1px;background:#6e6c62"></div>
<div class="a" style="left:476px;top:336px;width:364px;height:1px;background:#c4c4c4"></div>
<div class="a" style="left:462px;top:336px;width:14px;height:1px;background:#6e6c62"></div>
<div class="a" style="left:476px;top:350px;width:364px;height:1px;background:#c4c4c4"></div>
<div class="a" style="left:462px;top:350px;width:14px;height:1px;background:#6e6c62"></div>
<div class="a" style="left:476px;top:364px;width:364px;height:1px;background:#6e6c62"></div>
<div class="a" style="left:462px;top:364px;width:14px;height:1px;background:#6e6c62"></div>
<div class="a gt" style="left:477px;top:295px;width:32px;height:14px;line-height:14px;text-align:center;padding:0 2px 0 2px;color:#000"><span style="display:inline-block;transform:scaleX(0.88);transform-origin:center">pil</span></div>
<div class="a gt" style="left:510px;top:295px;width:43px;height:14px;line-height:14px;text-align:right;padding:0 1px 0 2px;color:#000"><span style="display:inline-block;transform:scaleX(0.88);transform-origin:right">x</span></div>
<div class="a gt" style="left:554px;top:295px;width:43px;height:14px;line-height:14px;text-align:right;padding:0 1px 0 2px;color:#000"><span style="display:inline-block;transform:scaleX(0.88);transform-origin:right">y</span></div>
<div class="a gt" style="left:598px;top:295px;width:43px;height:14px;line-height:14px;text-align:right;padding:0 1px 0 2px;color:#000"><span style="display:inline-block;transform:scaleX(0.88);transform-origin:right">b</span></div>
<div class="a gt" style="left:642px;top:295px;width:32px;height:14px;line-height:14px;text-align:right;padding:0 1px 0 2px;color:#000"><span style="display:inline-block;transform:scaleX(0.88);transform-origin:right">h</span></div>
<div class="a gt" style="left:675px;top:295px;width:32px;height:14px;line-height:14px;text-align:right;padding:0 1px 0 2px;color:#000"><span style="display:inline-block;transform:scaleX(0.88);transform-origin:right">l</span></div>
<div class="a gt" style="left:708px;top:295px;width:43px;height:14px;line-height:14px;text-align:right;padding:0 1px 0 2px;color:#000"><span style="display:inline-block;transform:scaleX(0.88);transform-origin:right">r</span></div>
<div class="a gt" style="left:752px;top:295px;width:43px;height:14px;line-height:14px;text-align:center;padding:0 2px 0 2px;color:#000"><span style="display:inline-block;transform:scaleX(0.88);transform-origin:center">jed</span></div>
<div class="a gt" style="left:796px;top:295px;width:43px;height:14px;line-height:14px;text-align:left;padding:0 2px 0 4px;color:#000"><span style="display:inline-block;transform:scaleX(0.88);transform-origin:left">pqp</span></div>
<div class="a gt" style="left:477px;top:310px;width:32px;height:13px;line-height:13px;text-align:center;padding:0 2px 0 2px;color:#000"><span style="display:inline-block;transform:scaleX(0.88);transform-origin:center">1</span></div>
<div class="a gt" style="left:510px;top:310px;width:43px;height:13px;line-height:13px;text-align:right;padding:0 1px 0 2px;color:#000"><span style="display:inline-block;transform:scaleX(0.88);transform-origin:right">50,0</span></div>
<div class="a gt" style="left:554px;top:310px;width:43px;height:13px;line-height:13px;text-align:right;padding:0 1px 0 2px;color:#000"><span style="display:inline-block;transform:scaleX(0.88);transform-origin:right">20,0</span></div>
<div class="a gt" style="left:598px;top:310px;width:43px;height:13px;line-height:13px;text-align:right;padding:0 1px 0 2px;color:#000"><span style="display:inline-block;transform:scaleX(0.88);transform-origin:right">40</span></div>
<div class="a gt" style="left:642px;top:310px;width:32px;height:13px;line-height:13px;text-align:right;padding:0 1px 0 2px;color:#000"><span style="display:inline-block;transform:scaleX(0.88);transform-origin:right">80</span></div>
<div class="a gt" style="left:675px;top:310px;width:32px;height:13px;line-height:13px;text-align:right;padding:0 1px 0 2px;color:#000"><span style="display:inline-block;transform:scaleX(0.88);transform-origin:right">100</span></div>
<div class="a gt" style="left:708px;top:310px;width:43px;height:13px;line-height:13px;text-align:right;padding:0 1px 0 2px;color:#000"><span style="display:inline-block;transform:scaleX(0.88);transform-origin:right">0,0</span></div>
<div class="a gt" style="left:752px;top:310px;width:43px;height:13px;line-height:13px;text-align:center;padding:0 2px 0 2px;color:#000"><span style="display:inline-block;transform:scaleX(0.88);transform-origin:center">0</span></div>
<div class="a gt" style="left:796px;top:310px;width:43px;height:13px;line-height:13px;text-align:left;padding:0 2px 0 4px;color:#000"><span style="display:inline-block;transform:scaleX(0.88);transform-origin:left">2H</span></div>
<div class="a" style="left:826px;top:311px;width:12px;height:11px;background:#f0eee4"><svg class="a" style="left:3px;top:5px" width="6" height="4"><path d="M0 0H6L3 3.5Z" fill="#000"/></svg></div>
<div class="a gt" style="left:477px;top:324px;width:32px;height:13px;line-height:13px;text-align:center;padding:0 2px 0 2px;color:#000"><span style="display:inline-block;transform:scaleX(0.88);transform-origin:center">2</span></div>
<div class="a gt" style="left:510px;top:324px;width:43px;height:13px;line-height:13px;text-align:right;padding:0 1px 0 2px;color:#000"><span style="display:inline-block;transform:scaleX(0.88);transform-origin:right">450,0</span></div>
<div class="a gt" style="left:554px;top:324px;width:43px;height:13px;line-height:13px;text-align:right;padding:0 1px 0 2px;color:#000"><span style="display:inline-block;transform:scaleX(0.88);transform-origin:right">20,0</span></div>
<div class="a gt" style="left:598px;top:324px;width:43px;height:13px;line-height:13px;text-align:right;padding:0 1px 0 2px;color:#000"><span style="display:inline-block;transform:scaleX(0.88);transform-origin:right">40</span></div>
<div class="a gt" style="left:642px;top:324px;width:32px;height:13px;line-height:13px;text-align:right;padding:0 1px 0 2px;color:#000"><span style="display:inline-block;transform:scaleX(0.88);transform-origin:right">80</span></div>
<div class="a gt" style="left:675px;top:324px;width:32px;height:13px;line-height:13px;text-align:right;padding:0 1px 0 2px;color:#000"><span style="display:inline-block;transform:scaleX(0.88);transform-origin:right">100</span></div>
<div class="a gt" style="left:708px;top:324px;width:43px;height:13px;line-height:13px;text-align:right;padding:0 1px 0 2px;color:#000"><span style="display:inline-block;transform:scaleX(0.88);transform-origin:right">0,0</span></div>
<div class="a gt" style="left:752px;top:324px;width:43px;height:13px;line-height:13px;text-align:center;padding:0 2px 0 2px;color:#000"><span style="display:inline-block;transform:scaleX(0.88);transform-origin:center">0</span></div>
<div class="a gt" style="left:796px;top:324px;width:43px;height:13px;line-height:13px;text-align:left;padding:0 2px 0 4px;color:#000"><span style="display:inline-block;transform:scaleX(0.88);transform-origin:left">2H</span></div>
<div class="a" style="left:826px;top:325px;width:12px;height:11px;background:#f0eee4"><svg class="a" style="left:3px;top:5px" width="6" height="4"><path d="M0 0H6L3 3.5Z" fill="#000"/></svg></div>
<div class="a gt" style="left:477px;top:338px;width:32px;height:13px;line-height:13px;text-align:center;padding:0 2px 0 2px;color:#000"><span style="display:inline-block;transform:scaleX(0.88);transform-origin:center">3</span></div>
<div class="a gt" style="left:510px;top:338px;width:43px;height:13px;line-height:13px;text-align:right;padding:0 1px 0 2px;color:#000"><span style="display:inline-block;transform:scaleX(0.88);transform-origin:right">50,0</span></div>
<div class="a gt" style="left:554px;top:338px;width:43px;height:13px;line-height:13px;text-align:right;padding:0 1px 0 2px;color:#000"><span style="display:inline-block;transform:scaleX(0.88);transform-origin:right">380,0</span></div>
<div class="a gt" style="left:598px;top:338px;width:43px;height:13px;line-height:13px;text-align:right;padding:0 1px 0 2px;color:#000"><span style="display:inline-block;transform:scaleX(0.88);transform-origin:right">40</span></div>
<div class="a gt" style="left:642px;top:338px;width:32px;height:13px;line-height:13px;text-align:right;padding:0 1px 0 2px;color:#000"><span style="display:inline-block;transform:scaleX(0.88);transform-origin:right">80</span></div>
<div class="a gt" style="left:675px;top:338px;width:32px;height:13px;line-height:13px;text-align:right;padding:0 1px 0 2px;color:#000"><span style="display:inline-block;transform:scaleX(0.88);transform-origin:right">100</span></div>
<div class="a gt" style="left:708px;top:338px;width:43px;height:13px;line-height:13px;text-align:right;padding:0 1px 0 2px;color:#000"><span style="display:inline-block;transform:scaleX(0.88);transform-origin:right">0,0</span></div>
<div class="a gt" style="left:752px;top:338px;width:43px;height:13px;line-height:13px;text-align:center;padding:0 2px 0 2px;color:#000"><span style="display:inline-block;transform:scaleX(0.88);transform-origin:center">0</span></div>
<div class="a gt" style="left:796px;top:338px;width:43px;height:13px;line-height:13px;text-align:left;padding:0 2px 0 4px;color:#000"><span style="display:inline-block;transform:scaleX(0.88);transform-origin:left">2H</span></div>
<div class="a" style="left:826px;top:339px;width:12px;height:11px;background:#f0eee4"><svg class="a" style="left:3px;top:5px" width="6" height="4"><path d="M0 0H6L3 3.5Z" fill="#000"/></svg></div>
<div class="a gt" style="left:477px;top:352px;width:32px;height:13px;line-height:13px;text-align:center;padding:0 2px 0 2px;color:#000"><span style="display:inline-block;transform:scaleX(0.88);transform-origin:center">4</span></div>
<div class="a gt" style="left:510px;top:352px;width:43px;height:13px;line-height:13px;text-align:right;padding:0 1px 0 2px;color:#000"><span style="display:inline-block;transform:scaleX(0.88);transform-origin:right">450,0</span></div>
<div class="a gt" style="left:554px;top:352px;width:43px;height:13px;line-height:13px;text-align:right;padding:0 1px 0 2px;color:#000"><span style="display:inline-block;transform:scaleX(0.88);transform-origin:right">380,0</span></div>
<div class="a gt" style="left:598px;top:352px;width:43px;height:13px;line-height:13px;text-align:right;padding:0 1px 0 2px;color:#000"><span style="display:inline-block;transform:scaleX(0.88);transform-origin:right">40</span></div>
<div class="a gt" style="left:642px;top:352px;width:32px;height:13px;line-height:13px;text-align:right;padding:0 1px 0 2px;color:#000"><span style="display:inline-block;transform:scaleX(0.88);transform-origin:right">80</span></div>
<div class="a gt" style="left:675px;top:352px;width:32px;height:13px;line-height:13px;text-align:right;padding:0 1px 0 2px;color:#000"><span style="display:inline-block;transform:scaleX(0.88);transform-origin:right">100</span></div>
<div class="a gt" style="right:119px;top:351px;height:13px;line-height:15px;color:#fff;padding:0 1px 0 0"><span style="display:inline-block;transform:scaleX(0.88);transform-origin:right;background:#316ac5">0,0</span></div>
<div class="a gt" style="left:752px;top:352px;width:43px;height:13px;line-height:13px;text-align:center;padding:0 2px 0 2px;color:#000"><span style="display:inline-block;transform:scaleX(0.88);transform-origin:center">0</span></div>
<div class="a gt" style="left:796px;top:352px;width:43px;height:13px;line-height:13px;text-align:left;padding:0 2px 0 4px;color:#000"><span style="display:inline-block;transform:scaleX(0.88);transform-origin:left">2H</span></div>
<div class="a" style="left:826px;top:353px;width:12px;height:11px;background:#f0eee4"><svg class="a" style="left:3px;top:5px" width="6" height="4"><path d="M0 0H6L3 3.5Z" fill="#000"/></svg></div>
<div class="a" style="left:463px;top:351px;width:13px;height:13px;background:#f6f4ec"></div>
<svg class="a" style="left:463px;top:351px" width="13" height="13"><path d="M4.5 11L5 8L10 1.5L12 3L7 9.5Z" fill="#fff" stroke="#000" stroke-width="1.3"/><path d="M4.5 11.5L6.5 10" stroke="#000" stroke-width="1.5"/><path d="M0 12.5H4" stroke="#404040" stroke-dasharray="1 1"/></svg>
<!--/GRIDS-->
 <div class="a" style="left:4px;top:30px;width:1px;height:50px;background:#d8e6f6"></div>
 <div class="a" style="left:4px;top:745px;width:1px;height:19px;background:#d8e6f6"></div>
 <div class="a" style="left:4px;top:763px;width:861px;height:1px;background:#d8e6f6"></div>
 <div id="sbar" class="a">
  <div class="a" style="left:0;top:2px;width:861px;height:1px;background:#aca899"></div>
  <div class="a" style="left:1px;top:3px;font-size:11px;line-height:16px;-webkit-text-stroke:0.2px #000">Progetto e verifica di plinti su pali</div>
  <svg class="a" style="left:847px;top:5px" width="13" height="13"><path d="M12.5 1.5L1.5 12.5M12.5 5.5L5.5 12.5M12.5 9.5L9.5 12.5" stroke="#aca899" stroke-width="1.3"/><path d="M13 3L3 13M13 7L7 13M13 11L11 13" stroke="#fff" stroke-width="0.8"/></svg>
 </div>
</div>
</body></html>
